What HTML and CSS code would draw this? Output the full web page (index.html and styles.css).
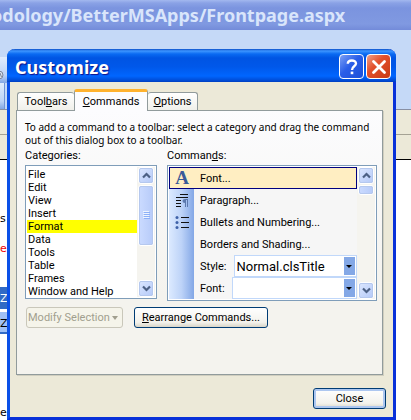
FILE: index.html
```
<!DOCTYPE html>
<html lang="en">
<head>
<meta charset="utf-8">
<title>Customize</title>
<link rel="stylesheet" href="styles.css">
</head>
<body>
<div class="app">
  <header class="app-title">odology/BetterMSApps/Frontpage.aspx</header>
  <div class="app-menu">
    <div class="tool"><svg width="5" height="12" viewBox="0 0 5 12"><circle cx="-1" cy="6" r="4" fill="#dbe4f2" stroke="#7b8699"/><path d="M0 4L1.500 8" stroke="#7b8699"/></svg></div>
    <div class="tool tool-sep"></div>
  </div>
  <div class="ruler"></div>
  <div class="ruler ruler-last"></div>
  <div class="doc">
    <p class="doc-line">s</p>
    <p class="doc-line red">e</p>
    <p class="doc-row dark">Z</p>
    <p class="doc-row light">Z</p>
    <p class="doc-line last">e</p>
  </div>
</div>

<main class="dialog" role="dialog" aria-labelledby="title">
  <header class="titlebar">
    <h1 id="title">Customize</h1>
    <button class="cap help" aria-label="Help">
      <svg width="16" height="18" viewBox="0 0 16 18"><path d="M3.8 5.8C3.8 1.4 12 1.4 12 5.6C12 8.4 8 8.3 8 12" fill="none" stroke="#fff" stroke-width="2.4"/><rect x="6.7" y="13.6" width="2.6" height="2.6" fill="#fff"/></svg>
    </button>
    <button class="cap close" aria-label="Close window">
      <svg width="16" height="16" viewBox="0 0 16 16"><path d="M2.5 2.5L13.5 13.5M13.5 2.5L2.5 13.5" stroke="#fff" stroke-width="2.8" stroke-linecap="round"/></svg>
    </button>
  </header>
  <div class="content">
    <div class="tabs" role="tablist">
      <button class="tab tab-first" role="tab">Tool<u>b</u>ars</button>
      <button class="tab active" role="tab" aria-selected="true"><u>C</u>ommands</button>
      <button class="tab tab-last" role="tab"><u>O</u>ptions</button>
    </div>
    <section class="panel">
      <p class="hint">To add a command to a toolbar: select a category and drag the command out of this dialog box to a toolbar.</p>
      <div class="columns">
        <div class="col">
          <h2 id="cat">Cate<u>g</u>ories:</h2>
          <div class="listbox">
            <ul class="categories" role="listbox" aria-labelledby="cat">
              <li role="option">File</li>
              <li role="option">Edit</li>
              <li role="option">View</li>
              <li role="option">Insert</li>
              <li role="option" class="picked" aria-selected="true">Format</li>
              <li role="option">Data</li>
              <li role="option">Tools</li>
              <li role="option">Table</li>
              <li role="option">Frames</li>
              <li role="option">Window and Help</li>
            </ul>
            <div class="scroll">
              <button class="arrow" aria-label="Scroll categories up"><svg width="9" height="7" viewBox="0 0 9 7"><path d="M1 5.5L4.5 2L8 5.5" fill="none" stroke="#4d6185" stroke-width="2.2"/></svg></button>
              <div class="thumb tall"><svg width="7" height="9" viewBox="0 0 7 9"><path d="M0 .5H6M0 2.5H6M0 4.5H6M0 6.5H6" stroke="#eef4fe"/><path d="M1 1.5H7M1 3.5H7M1 5.5H7M1 7.5H7" stroke="#8cb0f8"/></svg></div>
              <button class="arrow down" aria-label="Scroll categories down"><svg width="9" height="7" viewBox="0 0 9 7"><path d="M1 1.5L4.5 5L8 1.5" fill="none" stroke="#4d6185" stroke-width="2.2"/></svg></button>
            </div>
          </div>
        </div>
        <div class="col grow">
          <h2 id="com">Comman<u>d</u>s:</h2>
          <div class="listbox tall-list">
            <ul class="commands" aria-labelledby="com">
              <li class="chosen"><span class="icon letter">A</span><span class="name">Font...</span></li>
              <li><span class="icon"><svg width="14" height="14" viewBox="0 0 14 14"><path d="M5 1.5H13M1 4.5H13M1 7.5H6M1 10.5H6M1 13.5H6" stroke="#111"/><path d="M13 6.500H9.500A1.500 1.500 0 0 0 9.500 9.500H10.500V6.500M10.500 6V14M12.500 6V14" fill="#5b78ad" stroke="#5b78ad"/></svg></span><span class="name">Paragraph...</span></li>
              <li><span class="icon"><svg width="14" height="14" viewBox="0 0 14 14"><path d="M6 2.500H14M6 7.500H14M6 12.500H14" stroke="#111"/><g fill="#3f62a8"><circle cx="2" cy="2.500" r="1.500"/><circle cx="2" cy="7.500" r="1.500"/><circle cx="2" cy="12.500" r="1.500"/></g></svg></span><span class="name">Bullets and Numbering...</span></li>
              <li><span class="icon"></span><span class="name">Borders and Shading...</span></li>
              <li><span class="icon"></span><label class="name" for="style">Style:</label><span class="combo"><select id="style"><option>Normal.clsTitle</option></select></span></li>
              <li><span class="icon"></span><label class="name" for="font">Font:</label><span class="combo"><select id="font"><option></option></select></span></li>
            </ul>
            <div class="scroll">
              <button class="arrow" aria-label="Scroll commands up"><svg width="9" height="7" viewBox="0 0 9 7"><path d="M1 5.5L4.5 2L8 5.5" fill="none" stroke="#4d6185" stroke-width="2.2"/></svg></button>
              <div class="thumb short"></div>
              <button class="arrow down" aria-label="Scroll commands down"><svg width="9" height="7" viewBox="0 0 9 7"><path d="M1 1.5L4.5 5L8 1.5" fill="none" stroke="#4d6185" stroke-width="2.2"/></svg></button>
            </div>
          </div>
        </div>
      </div>
      <div class="actions">
        <button class="btn modify" disabled>Modify Selection <svg width="6" height="4" viewBox="0 0 6 4"><path d="M0 0H6L3 4Z" fill="#a19f8e"/></svg></button>
        <button class="btn rearrange"><u>R</u>earrange Commands...</button>
      </div>
    </section>
    <footer class="foot"><button class="btn default">Close</button></footer>
  </div>
</main>
</body>
</html>
```
FILE: styles.css
```
* { box-sizing: border-box; }
body, h1, h2, p, ul { margin: 0; padding: 0; }
ul { list-style: none; }
body { font: 11px/13px Roboto, "Noto Sans", sans-serif; color: #000; background: #fff; overflow: hidden; }
button, select { font: inherit; color: inherit; margin: 0; padding: 0; }
u { text-underline-offset: 1px; }
svg { display: block; flex: none; }

/* Window behind the dialog */
.app-title { height: 30px; margin-left: -9px; background: linear-gradient(#a3b8ef 0, #8aa2e6 3px, #7b94df 8px, #8099e1 24px, #738bd9); color: #d9e5fb; font: bold 18px/31px "Noto Sans", sans-serif; white-space: nowrap; overflow: hidden; }
.app-menu { height: 80px; padding-top: 27px; background: #c5d9f7; border-bottom: 1px solid #888fa3; }
.tool { width: 20px; height: 26px; padding-top: 12px; background: linear-gradient(#e0ecfd, #bcd3f6 70%, #82a6e4); }
.tool-sep { width: 5px; border-right: 1px solid #6e93d6; }
.ruler { height: 25px; background: #ece9d8; border-bottom: 1px solid #a5a294; }
.ruler-last { border-bottom-color: #000; }
.doc { padding-top: 51px; font: 11px/15px "DejaVu Sans", sans-serif; }
.doc-line { height: 30px; }
.red { color: #e00; height: 46px; }
.doc-row { width: 20px; height: 22px; line-height: 24px; }
.dark { background: #316ac5; color: #fff; }
.light { background: #9fc0f5; border-bottom: 2px solid #316ac5; margin-top: 3px; margin-bottom: 71px; }

/* Dialog */
.dialog { position: absolute; top: 49px; left: 7px; right: 15px; border: solid #0831d9; border-width: 0 3px 3px; border-left-color: #0a50e8; border-radius: 8px 8px 0 0; background: #ece9d8; }
.titlebar { display: flex; align-items: center; gap: 2px; height: 33px; margin: 0 -3px; padding: 2px 5px 0 8px; border-radius: 8px 8px 0 0; background: linear-gradient(#0a4fc9 0, #3d95ff 2px, #0a6af2 5px, #0054e3 9px, #0058ea 18px, #0066ff 27px, #0048d0 32px, #003dbe); }
h1 { flex: 1; color: #fff; font: bold 18px/26px "Noto Sans", sans-serif; text-shadow: 1px 1px 1px #0f1089; }
.cap { display: grid; place-items: center; width: 25px; height: 25px; border: 1px solid #fff; border-radius: 4px; }
.help { background: linear-gradient(135deg, #7ca0f5, #2a5ee8 45%, #1c50d8); }
.close { background: linear-gradient(135deg, #f0a088, #e2502c 40%, #c83a14); }
.content { padding: 7px 10px 8px 6px; }

.tabs { display: flex; align-items: flex-end; height: 21px; padding-left: 1px; }
.tab { height: 18px; border: 1px solid #919b9c; border-bottom: 0; border-radius: 3px 3px 0 0; background: linear-gradient(#fff, #f0f0ea); }
.tab-first { width: 57px; border-right: 0; }
.tab-last { width: 50px; border-left: 0; }
.active { position: relative; width: 74px; height: 22px; margin-bottom: -1px; border-top: 3px solid #ffb22e; background: #fcfcfe; }
.panel { padding: 10px 5px 46px 8px; border: 1px solid #919b9c; background: linear-gradient(#fcfcfe, #f4f3ee 70%); box-shadow: 1px 1px 0 #d0cebf; }
.hint { margin-right: -5px; font-family: "Noto Sans", sans-serif; font-size: 10px; }
.columns { display: flex; gap: 10px; margin-top: 2px; }
.col { width: 132px; }
.grow { flex: 1; width: auto; }
h2 { font: inherit; height: 16px; }
.listbox { display: flex; height: 134px; padding: 1px; border: 1px solid #7f9db9; background: #fff; }
.tall-list { height: 136px; }
.categories { flex: 1; padding-top: 1px; }
.categories li { padding-left: 1px; }
.picked { background: #ff0; }

.scroll { display: flex; flex-direction: column; width: 18px; padding: 0 1px; background: #f5f4ef; }
.arrow, .thumb { display: grid; place-items: center; border: 1px solid #fff; border-radius: 3px; background: linear-gradient(135deg, #dce7ff, #b4c9f8); outline: 1px solid #b5c8ee; outline-offset: -2px; }
.arrow { height: 17px; }
.down { margin-top: auto; }
.thumb { margin-top: 1px; background: linear-gradient(90deg, #cbdbff, #b7cbf9); }
.tall { height: 61px; }
.short { height: 10px; }

.commands { flex: 1; background: #f6f6f6; }
.commands li { display: flex; align-items: center; height: 22px; }
.icon { display: grid; place-items: center; align-self: stretch; width: 25px; margin-right: 6px; background: linear-gradient(90deg, #dceaff, #bdd3f8 50%, #83a7e6); }
.commands .chosen { border: 1px solid #000080; background: #ffeec2; }
.chosen .icon { width: 24px; background: none; }
.letter { color: #3a5a98; font: bold 19px/18px "Liberation Serif", serif; }
.combo { position: relative; flex: 1; display: flex; align-self: stretch; margin-left: 7px; border: 1px solid #c1d8fa; }
.combo::after { content: ""; position: absolute; right: 4px; top: 9px; border: 3px solid transparent; border-top-color: #000; pointer-events: none; }
select { flex: 1; width: 100%; padding-left: 1px; border: 1px solid #fff; border-radius: 0; appearance: none; background: linear-gradient(#84a8e6, #84a8e6) right / 11px 100% no-repeat #fff; font-size: 13px; }

.actions { display: flex; gap: 11px; margin-top: 6px; padding-left: 1px; }
.btn { height: 21px; padding: 0 7px; border: 1px solid #003c74; border-radius: 3px; background: linear-gradient(#fff, #f3f2ec 75%, #d9d5c8); }
.modify { display: flex; align-items: center; justify-content: space-between; width: 97px; padding: 0 4px 0 1px; border-color: #c9c7ba; background: #f5f4ea; color: #a19f8e; }
.rearrange { min-width: 134px; }
.foot { display: flex; justify-content: flex-end; padding-top: 13px; margin-right: -3px; }
.default { width: 73px; box-shadow: inset 0 0 0 2px #adc7f0; }
```
